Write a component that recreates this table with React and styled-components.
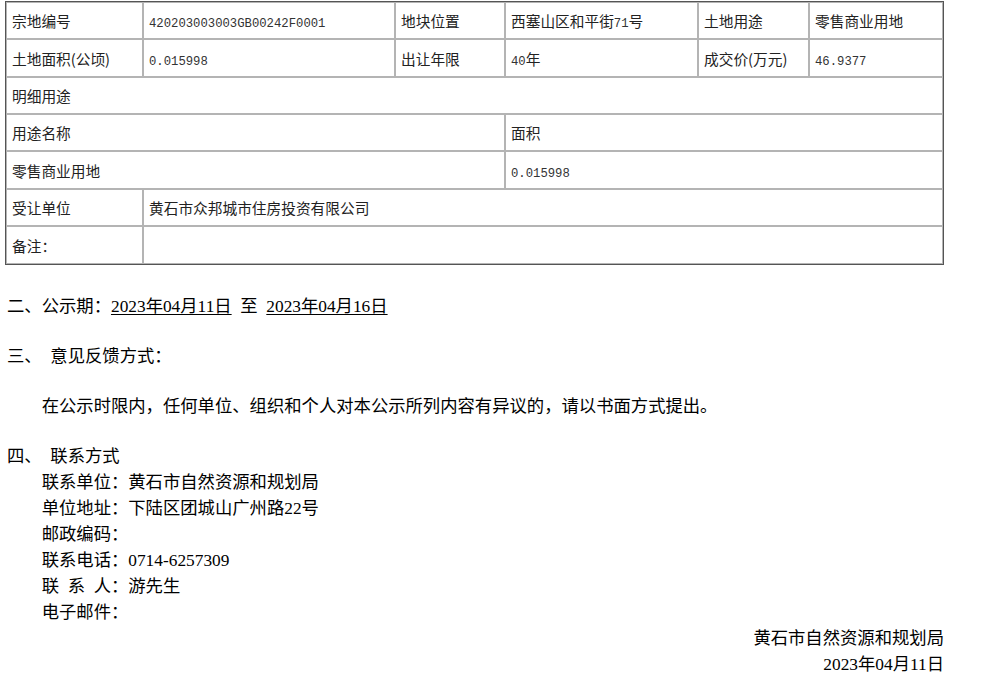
import React from 'react';
import styled, { createGlobalStyle } from 'styled-components';

const GlobalStyle = createGlobalStyle`
  html, body { margin: 0; padding: 0; background: #fff; }
  body { font-family: "Noto Sans CJK SC", sans-serif; color: #000; }
`;

const Page = styled.div`
  width: 939px;
  padding: 1px 0 0 5px;
`;

const Table = styled.table`
  width: 939px;
  table-layout: fixed;
  border: 1px solid #555;
  border-spacing: 0;
  font-size: 14.7px;
  color: #222;
`;

const Col = styled.col`
  width: ${(p) => p.$w}px;
`;

const Row = styled.tr`
  height: ${(p) => p.$h}px;
`;

const Cell = styled.td`
  border: 1px solid #b4b4b4;
  padding: 0 5px;
  vertical-align: middle;
  white-space: nowrap;
  overflow: hidden;
`;

const Num = styled.span`
  font-family: "Liberation Mono", monospace;
  font-size: 12.25px;
  color: #333;
`;

const Notice = styled.div`
  margin-top: 29px;
  padding-left: 2px;
  display: flex;
  flex-direction: column;
  gap: 24px;
  font-family: "Liberation Serif", "Noto Sans CJK SC", sans-serif;
  font-size: 17.33px;
  line-height: 26px;
`;

const Para = styled.p`
  margin: 0;
  padding-left: ${(p) => (p.$indent ? '2em' : '0')};
  white-space: pre;
`;

const Block = styled.div`
  display: flex;
  flex-direction: column;
`;

const Line = styled.div`
  padding-left: ${(p) => (p.$indent ? '2em' : '0')};
  text-align: ${(p) => (p.$right ? 'right' : 'left')};
  white-space: pre;
`;

const DateText = styled.span`
  text-decoration: underline;
  text-underline-offset: 2px;
`;

const cols = [137, 252, 110, 193, 111, 134];
const contacts = [
  '联系单位：黄石市自然资源和规划局',
  '单位地址：下陆区团城山广州路22号',
  '邮政编码：',
  '联系电话：0714-6257309',
  '联\u2002系\u2002人：游先生',
  '电子邮件：',
];

const App = () => {
  return (
    <Page>
      <GlobalStyle />
      <Table>
        <colgroup>
          {cols.map((w, i) => (
            <Col key={i} $w={w} />
          ))}
        </colgroup>
        <tbody>
          <Row $h={37}>
            <Cell>宗地编号</Cell>
            <Cell><Num>420203003003GB00242F0001</Num></Cell>
            <Cell>地块位置</Cell>
            <Cell>西塞山区和平街<Num>71</Num>号</Cell>
            <Cell>土地用途</Cell>
            <Cell>零售商业用地</Cell>
          </Row>
          <Row $h={38}>
            <Cell>土地面积(公顷)</Cell>
            <Cell><Num>0.015998</Num></Cell>
            <Cell>出让年限</Cell>
            <Cell><Num>40</Num>年</Cell>
            <Cell>成交价(万元)</Cell>
            <Cell><Num>46.9377</Num></Cell>
          </Row>
          <Row $h={37}>
            <Cell colSpan={6}>明细用途</Cell>
          </Row>
          <Row $h={37}>
            <Cell colSpan={3}>用途名称</Cell>
            <Cell colSpan={3}>面积</Cell>
          </Row>
          <Row $h={38}>
            <Cell colSpan={3}>零售商业用地</Cell>
            <Cell colSpan={3}><Num>0.015998</Num></Cell>
          </Row>
          <Row $h={37}>
            <Cell>受让单位</Cell>
            <Cell colSpan={5}>黄石市众邦城市住房投资有限公司</Cell>
          </Row>
          <Row $h={38}>
            <Cell>备注：</Cell>
            <Cell colSpan={5}></Cell>
          </Row>
        </tbody>
      </Table>

      <Notice>
        <Para>
          二、公示期：<DateText>2023年04月11日</DateText>{'\u2002'}至{'\u2002'}<DateText>2023年04月16日</DateText>
        </Para>
        <Para>三、{'\u2002'}意见反馈方式：</Para>
        <Para $indent>在公示时限内，任何单位、组织和个人对本公示所列内容有异议的，请以书面方式提出。</Para>
        <Block>
          <Line>四、{'\u2002'}联系方式</Line>
          {contacts.map((c) => (
            <Line key={c} $indent>{c}</Line>
          ))}
          <Line $right>黄石市自然资源和规划局</Line>
          <Line $right>2023年04月11日</Line>
        </Block>
      </Notice>
    </Page>
  );
};

export default App;
